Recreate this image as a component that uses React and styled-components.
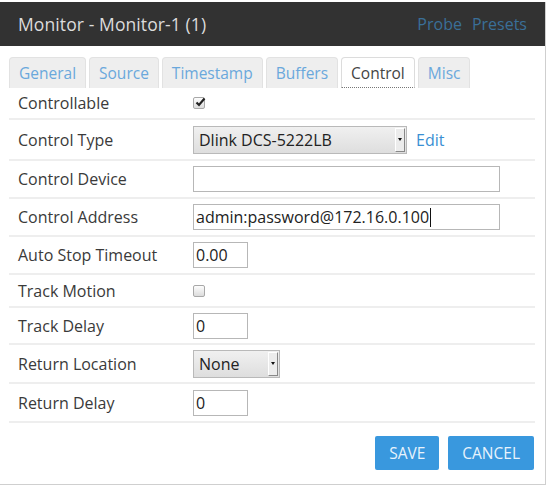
import React from "react";
import styled, { createGlobalStyle } from "styled-components";

const Global = createGlobalStyle`
  html, body { margin: 0; padding: 0; background: #fff; }
  body { font-family: "Open Sans", "Liberation Sans", sans-serif; color: #333; }
`;

const Modal = styled.div`
  margin-top: 2px;
  width: 546px;
  height: 483px;
  border-right: 1px solid #cfcfcf;
  border-bottom: 1px solid #cfcfcf;
  box-sizing: border-box;
  display: flex;
  flex-direction: column;
`;

const Header = styled.div`
  height: 44px;
  background: #323232;
  display: flex;
  align-items: center;
  justify-content: space-between;
  padding: 0 18px 0 18px;
`;

const Title = styled.div`
  font-size: 17.5px;
  color: #dcdcdc;
  letter-spacing: 0.1px;
`;

const HeaderLinks = styled.div`
  display: flex;
  gap: 10px;
`;

const HeaderLink = styled.span`
  font-size: 16px;
  color: #3a6f98;
`;

const Body = styled.div`
  padding: 11px 10px 0 9px;
  display: flex;
  flex-direction: column;
`;

const Tabs = styled.div`
  display: flex;
  height: 31px;
`;

const Tab = styled.div`
  box-sizing: border-box;
  height: 31px;
  padding: 0 9px;
  margin-right: 3px;
  display: flex;
  align-items: center;
  font-size: 15.5px;
  border: 1px solid ${(p) => (p.$active ? "#dcdcdc" : "#e2e2e2")};
  border-bottom: ${(p) => (p.$active ? "1px dotted #777" : "none")};
  border-radius: 4px 4px 0 0;
  background: ${(p) => (p.$active ? "#fff" : "#eeeeee")};
  color: ${(p) => (p.$active ? "#444" : "#6aa8dc")};
`;

const Table = styled.div`
  display: flex;
  flex-direction: column;
`;

const Row = styled.div`
  display: flex;
  align-items: center;
  height: ${(p) => p.$h}px;
  border-bottom: 2px solid #eeeeee;
  box-sizing: border-box;
`;

const Label = styled.div`
  width: 184px;
  padding-left: 9px;
  box-sizing: border-box;
  font-size: 16px;
  color: #3a3a3a;
`;

const Value = styled.div`
  display: flex;
  align-items: center;
  gap: 9px;
`;

const Field = styled.div`
  box-sizing: border-box;
  width: ${(p) => p.$w}px;
  height: 26px;
  border: 1px solid #b7b7b7;
  background: #fff;
  font-size: 16px;
  color: #222;
  padding-left: 2px;
  display: flex;
  align-items: center;
  white-space: nowrap;
`;

const Caret = styled.span`
  display: inline-block;
  width: 1px;
  height: 19px;
  background: #111;
  margin-left: 1px;
`;

const Select = styled.div`
  box-sizing: border-box;
  width: ${(p) => p.$w}px;
  height: 28px;
  border: 1px solid #b9b9b9;
  background: linear-gradient(#f0f0f0, #dedede);
  display: flex;
  align-items: center;
  justify-content: space-between;
  font-size: 16px;
  color: #222;
  padding-left: 5px;
`;

const SelectButton = styled.div`
  box-sizing: border-box;
  width: 10px;
  height: 24px;
  margin-right: 1px;
  background: #ececec;
  border-left: 1px solid #fff;
  border-top: 1px solid #fff;
  border-right: 1px solid #888;
  border-bottom: 1px solid #888;
  display: flex;
  align-items: center;
  justify-content: center;
  &::after {
    content: "";
    border-left: 2px solid transparent;
    border-right: 2px solid transparent;
    border-top: 3px solid #111;
  }
`;

const EditLink = styled.span`
  font-size: 16px;
  color: #3a8fd3;
`;

const CheckBox = styled.div`
  box-sizing: border-box;
  width: 12px;
  height: 12px;
  border: 1px solid #a8a8a8;
  border-radius: 2px;
  background: linear-gradient(#fdfdfd, #dcdcdc);
  position: relative;
`;

const Check = styled.svg`
  position: absolute;
  left: 0px;
  top: -2px;
`;

const Footer = styled.div`
  display: flex;
  justify-content: flex-end;
  gap: 9px;
  margin-top: 13px;
  padding-right: 1px;
`;

const Button = styled.div`
  height: 34px;
  padding: 0 ${(p) => p.$px}px;
  display: flex;
  align-items: center;
  background: #3998de;
  border-radius: 2px;
  color: #e8f3fc;
  font-size: 15.5px;
  text-transform: uppercase;
`;

export default function App() {
  const tabs = ["General", "Source", "Timestamp", "Buffers", "Control", "Misc"];
  return (
    <>
      <Global />
      <Modal>
        <Header>
          <Title>Monitor - Monitor-1 (1)</Title>
          <HeaderLinks>
            <HeaderLink>Probe</HeaderLink>
            <HeaderLink>Presets</HeaderLink>
          </HeaderLinks>
        </Header>
        <Body>
          <Tabs>
            {tabs.map((t) => (
              <Tab key={t} $active={t === "Control"}>
                {t}
              </Tab>
            ))}
          </Tabs>
          <Table>
            <Row $h={32}>
              <Label>Controllable</Label>
              <Value>
                <CheckBox>
                  <Check width="13" height="12" viewBox="0 0 13 12">
                    <path d="M2.5 6.5 L5 9 L10.5 2.5" fill="none" stroke="#222" strokeWidth="2.2" />
                  </Check>
                </CheckBox>
              </Value>
            </Row>
            <Row $h={41}>
              <Label>Control Type</Label>
              <Value>
                <Select $w={214}>
                  Dlink DCS-5222LB
                  <SelectButton />
                </Select>
                <EditLink>Edit</EditLink>
              </Value>
            </Row>
            <Row $h={38}>
              <Label>Control Device</Label>
              <Value>
                <Field $w={307} />
              </Value>
            </Row>
            <Row $h={38}>
              <Label>Control Address</Label>
              <Value>
                <Field $w={307}>
                  admin:password@172.16.0.100
                  <Caret />
                </Field>
              </Value>
            </Row>
            <Row $h={38}>
              <Label>Auto Stop Timeout</Label>
              <Value>
                <Field $w={55}>0.00</Field>
              </Value>
            </Row>
            <Row $h={33}>
              <Label>Track Motion</Label>
              <Value>
                <CheckBox />
              </Value>
            </Row>
            <Row $h={37}>
              <Label>Track Delay</Label>
              <Value>
                <Field $w={55}>0</Field>
              </Value>
            </Row>
            <Row $h={39}>
              <Label>Return Location</Label>
              <Value>
                <Select $w={87}>
                  None
                  <SelectButton />
                </Select>
              </Value>
            </Row>
            <Row $h={39}>
              <Label>Return Delay</Label>
              <Value>
                <Field $w={55}>0</Field>
              </Value>
            </Row>
          </Table>
          <Footer>
            <Button $px={14}>Save</Button>
            <Button $px={14}>Cancel</Button>
          </Footer>
        </Body>
      </Modal>
    </>
  );
}
